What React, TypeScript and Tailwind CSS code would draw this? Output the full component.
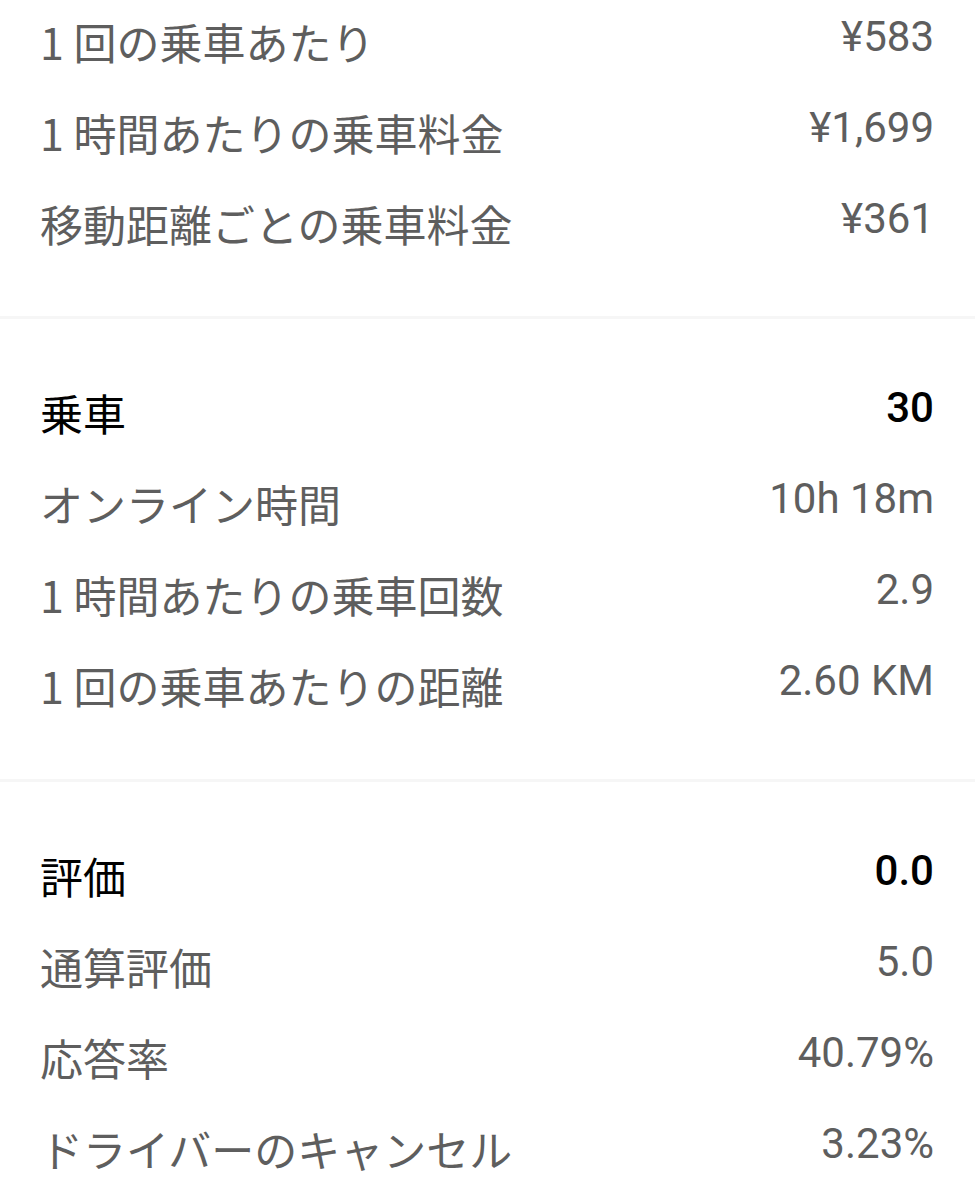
import React from 'react';

interface Row {
  label: string;
  value: string;
  head?: boolean;
}

const sections: Row[][] = [
  [
    { label: '1 回の乗車あたり', value: '¥583' },
    { label: '1 時間あたりの乗車料金', value: '¥1,699' },
    { label: '移動距離ごとの乗車料金', value: '¥361' },
  ],
  [
    { label: '乗車', value: '30', head: true },
    { label: 'オンライン時間', value: '10h 18m' },
    { label: '1 時間あたりの乗車回数', value: '2.9' },
    { label: '1 回の乗車あたりの距離', value: '2.60 KM' },
  ],
  [
    { label: '評価', value: '0.0', head: true },
    { label: '通算評価', value: '5.0' },
    { label: '応答率', value: '40.79%' },
    { label: 'ドライバーのキャンセル', value: '3.23%' },
  ],
];

const StatRow: React.FC<{ row: Row }> = ({ row }) => (
  <div className="flex h-[91px] items-center justify-between pl-[40px] pr-[41px]">
    <span
      className={`font-['Noto_Sans_CJK_JP',sans-serif] text-[43px] leading-[1.2] ${
        row.head ? 'text-black' : 'text-[#5e5e5e]'
      }`}
    >
      {row.label}
    </span>
    <span
      className={`-translate-y-[4px] font-['Roboto',sans-serif] text-[42px] leading-[1.2] ${
        row.head ? 'font-medium text-black' : 'text-[#5e5e5e]'
      }`}
    >
      {row.value}
    </span>
  </div>
);

export default function App() {
  return (
    <div className="h-[1200px] w-[975px] overflow-hidden bg-white">
      <div className="-mt-[4px]">
        {sections.map((rows, i) => (
          <div key={i}>
            {i > 0 && <div className="h-[3px] bg-[#f6f6f6]" />}
            <div className={i === 0 ? 'pb-[47px]' : 'py-[48px]'}>
              {rows.map((row) => (
                <StatRow key={row.label} row={row} />
              ))}
            </div>
          </div>
        ))}
      </div>
    </div>
  );
}
